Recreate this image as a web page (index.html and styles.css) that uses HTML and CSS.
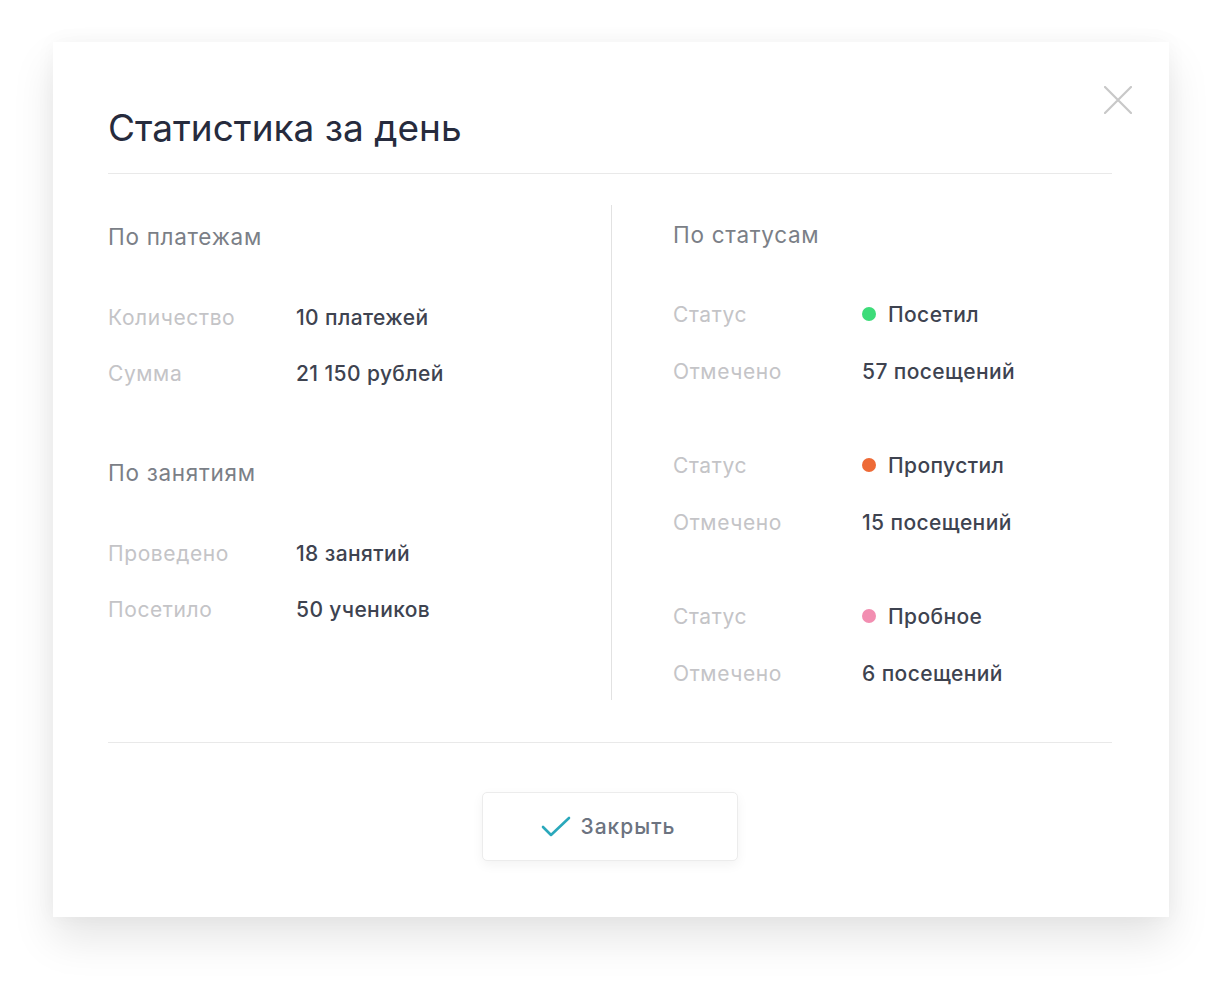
FILE: index.html
```html
<!DOCTYPE html>
<html lang="ru">
<head>
<meta charset="utf-8">
<title>Статистика за день</title>
<link rel="stylesheet" href="styles.css">
</head>
<body>
<div class="modal">
  <button class="close" aria-label="Закрыть">
    <svg width="28" height="28" viewBox="0 0 28 28"><path d="M1 1 L27 27 M27 1 L1 27" stroke="#c8c8c8" stroke-width="2.2" fill="none" stroke-linecap="round"/></svg>
  </button>
  <div class="header">
    <h1 class="title">Статистика за день</h1>
  </div>
  <div class="body">
    <div class="col col-left">
      <h2 class="section">По платежам</h2>
      <div class="rows rows-first">
        <div class="row"><span class="label">Количество</span><span class="value">10 платежей</span></div>
        <div class="row"><span class="label">Сумма</span><span class="value">21 150 рублей</span></div>
      </div>
      <h2 class="section section-second">По занятиям</h2>
      <div class="rows rows-first">
        <div class="row"><span class="label">Проведено</span><span class="value">18 занятий</span></div>
        <div class="row"><span class="label">Посетило</span><span class="value">50 учеников</span></div>
      </div>
    </div>
    <div class="divider"></div>
    <div class="col col-right">
      <h2 class="section section-right">По статусам</h2>
      <div class="rows rows-first">
        <div class="row"><span class="label">Статус</span><span class="value"><i class="dot dot-green"></i>Посетил</span></div>
        <div class="row"><span class="label">Отмечено</span><span class="value">57 посещений</span></div>
      </div>
      <div class="rows rows-next">
        <div class="row"><span class="label">Статус</span><span class="value"><i class="dot dot-orange"></i>Пропустил</span></div>
        <div class="row"><span class="label">Отмечено</span><span class="value">15 посещений</span></div>
      </div>
      <div class="rows rows-next">
        <div class="row"><span class="label">Статус</span><span class="value"><i class="dot dot-pink"></i>Пробное</span></div>
        <div class="row"><span class="label">Отмечено</span><span class="value">6 посещений</span></div>
      </div>
    </div>
  </div>
  <div class="footer">
    <button class="btn">
      <svg width="30" height="24" viewBox="0 0 30 24"><path d="M2 12 L10 20 L28 3" stroke="#2aa8bb" stroke-width="2.6" fill="none" stroke-linecap="round" stroke-linejoin="round"/></svg>
      <span>Закрыть</span>
    </button>
  </div>
</div>
</body>
</html>
```

FILE: styles.css
```css
html, body {
  margin: 0;
  padding: 0;
  background: #ffffff;
}
html { min-height: 100%; }
body {
  font-family: Inter, "Noto Sans", sans-serif;
  padding: 42px 0 0 53px;
  min-height: 982px;
  box-sizing: border-box;
}
.modal {
  position: relative;
  box-sizing: border-box;
  width: 1116px;
  height: 875px;
  padding: 0 57px 0 55px;
  background: #fff;
  box-shadow: 0 22px 40px rgba(0, 0, 0, 0.10), 0 0 20px rgba(0, 0, 0, 0.04);
}
.close {
  position: absolute;
  top: 44px;
  right: 37px;
  padding: 0;
  border: 0;
  background: none;
  width: 28px;
  height: 28px;
  cursor: pointer;
}
.close svg { display: block; }
.header {
  height: 132px;
  box-sizing: border-box;
  border-bottom: 1px solid #e9e9e9;
  display: flex;
  align-items: flex-start;
}
.title {
  margin: 62px 0 0;
  font-size: 37px;
  line-height: 48px;
  font-weight: 400;
  color: #262b3d;
}
.body {
  display: flex;
  padding-top: 31px;
  padding-bottom: 42px;
  border-bottom: 1px solid #e9e9e9;
}
.col-left { width: 503px; }
.divider {
  width: 1px;
  background: #e2e2e2;
  height: 495px;
}
.col-right {
  flex: 1;
  padding-left: 61px;
}
.section {
  margin: 17px 0 0;
  font-size: 22.5px;
  letter-spacing: 0.7px;
  line-height: 30px;
  font-weight: 400;
  color: #7b7f87;
}
.section-right { margin-top: 15px; }
.section-second { margin-top: 70px; }
.rows {
  display: flex;
  flex-direction: column;
  gap: 26px;
}
.col-right .rows { gap: 27px; }
.rows-first { margin-top: 50px; }
.col-right .rows-first { margin-top: 49px; }
.rows-next { margin-top: 64px; }
.row {
  display: grid;
  grid-template-columns: 188px 1fr;
  height: 30px;
  align-items: center;
  font-size: 21px;
}
.col-right .row { grid-template-columns: 189px 1fr; }
.label {
  color: #c4c4c7;
  letter-spacing: 0.6px;
}
.value {
  color: #3e4350;
  font-weight: 500;
  letter-spacing: 0.4px;
  display: flex;
  align-items: center;
}
.dot {
  display: inline-block;
  width: 14px;
  height: 14px;
  border-radius: 50%;
  margin-right: 12px;
}
.dot-green { background: #3ddc79; }
.dot-orange { background: #ee6a36; }
.dot-pink { background: #f28eb1; }
.footer {
  display: flex;
  justify-content: center;
  padding-top: 49px;
}
.btn {
  width: 256px;
  height: 69px;
  box-sizing: border-box;
  background: #fff;
  border: 1px solid #ececec;
  border-radius: 5px;
  box-shadow: 0 4px 12px rgba(0, 0, 0, 0.05);
  display: flex;
  align-items: center;
  justify-content: center;
  gap: 10px;
  font-family: Inter, "Noto Sans", sans-serif;
  font-size: 21px;
  font-weight: 500;
  letter-spacing: 1px;
  color: #6c7380;
  cursor: pointer;
  padding: 0;
}
.btn svg { display: block; margin-left: -4px; }
```
